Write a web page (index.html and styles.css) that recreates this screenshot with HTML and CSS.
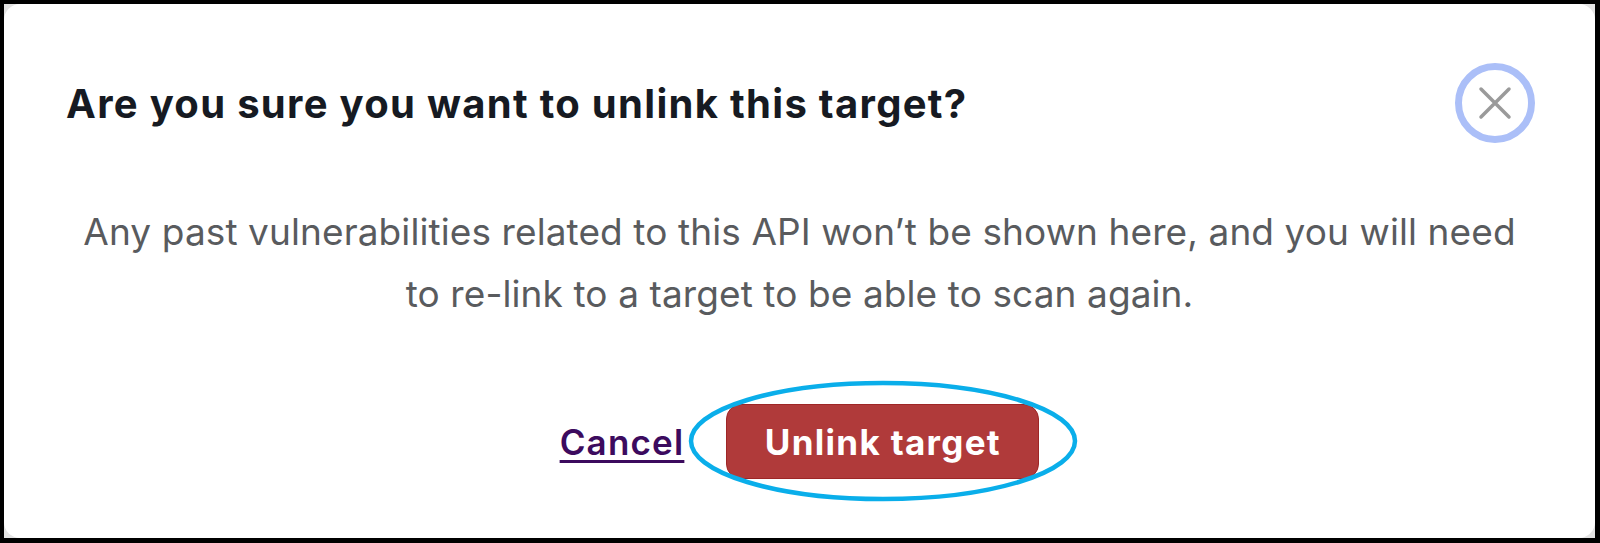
FILE: index.html
```html
<!DOCTYPE html>
<html>

<head>
  <title>Unlink target</title>
  <link rel="stylesheet" href="styles.css">
</head>

<body>
  <div id="backdrop">
    <div id="dialog">
      <div class="dialog-head">
        <h1 class="dialog-title">Are you sure you want to unlink this target?</h1>
        <button class="close" aria-label="Close">
          <svg width="34" height="34" viewBox="0 0 34 34">
            <path d="M3 3 L31 31 M31 3 L3 31" stroke="#9a9a9a" stroke-width="3.5" stroke-linecap="round" fill="none"/>
          </svg>
        </button>
      </div>
      <p class="dialog-text">Any past vulnerabilities related to this API won’t be shown here, and you will need<br>to re-link to a target to be able to scan again.</p>
      <div class="dialog-actions">
        <a class="cancel" href="#">Cancel</a>
        <span class="confirm-wrap">
          <button class="confirm">Unlink target</button>
          <svg class="mark" width="392" height="124" viewBox="0 0 392 124">
            <ellipse cx="196" cy="62" rx="192" ry="58" fill="none" stroke="#0aaeea" stroke-width="4.5"/>
          </svg>
        </span>
      </div>
    </div>
  </div>
</body>

</html>
```

FILE: styles.css
```css
html, body {
  margin: 0;
  padding: 0;
  width: 100%;
  height: 100%;
  background: #000;
  font-family: "Inter", "Liberation Sans", sans-serif;
  overflow: hidden;
}
body {
  padding: 4px 5px 5px 4px;
  box-sizing: border-box;
}
#backdrop {
  height: 100%;
  background: #e4e4e4;
}
#dialog {
  height: 100%;
  background: #fff;
  border-radius: 16px;
  padding: 59px 60px 0 62px;
  box-sizing: border-box;
}
.dialog-head {
  display: flex;
  align-items: center;
  justify-content: space-between;
  height: 80px;
}
.dialog-title {
  margin: 0;
  font-size: 40px;
  font-weight: 700;
  letter-spacing: 1.3px;
  color: #161a22;
}
.close {
  width: 80px;
  height: 80px;
  border-radius: 50%;
  border: 7px solid #abbff8;
  background: #fff;
  padding: 0;
  display: flex;
  align-items: center;
  justify-content: center;
  box-sizing: border-box;
  cursor: pointer;
}
.close svg {
  display: block;
}
.dialog-text {
  margin: 58px 0 0 -2px;
  font-size: 37px;
  line-height: 62px;
  letter-spacing: 0.1px;
  text-align: center;
  color: #595b5e;
}
.dialog-actions {
  display: flex;
  align-items: center;
  justify-content: center;
  gap: 42px;
  margin: 79px 0 0 -2px;
}
.cancel {
  font-size: 35px;
  font-weight: 600;
  letter-spacing: 1.2px;
  color: #3c0b5e;
  text-decoration: underline;
  text-decoration-thickness: 3px;
  text-underline-offset: 5px;
}
.confirm-wrap {
  position: relative;
  display: block;
}
.confirm {
  display: block;
  width: 313px;
  height: 75px;
  border-radius: 15px;
  border: 1px solid #9e2626;
  background: #b03a3a;
  color: #fff;
  font-family: "Inter", "Liberation Sans", sans-serif;
  font-size: 35px;
  font-weight: 700;
  letter-spacing: 1.3px;
  cursor: pointer;
}
.mark {
  position: absolute;
  left: -39px;
  top: -25px;
  pointer-events: none;
}
```
